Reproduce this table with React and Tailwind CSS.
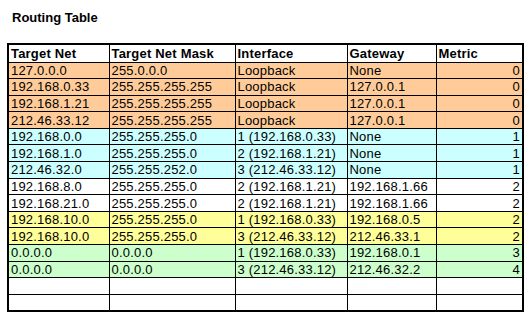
const rows = [
  ['127.0.0.0', '255.0.0.0', 'Loopback', 'None', '0', 'bg-[#ffcc99]'],
  ['192.168.0.33', '255.255.255.255', 'Loopback', '127.0.0.1', '0', 'bg-[#ffcc99]'],
  ['192.168.1.21', '255.255.255.255', 'Loopback', '127.0.0.1', '0', 'bg-[#ffcc99]'],
  ['212.46.33.12', '255.255.255.255', 'Loopback', '127.0.0.1', '0', 'bg-[#ffcc99]'],
  ['192.168.0.0', '255.255.255.0', '1 (192.168.0.33)', 'None', '1', 'bg-[#ccffff]'],
  ['192.168.1.0', '255.255.255.0', '2 (192.168.1.21)', 'None', '1', 'bg-[#ccffff]'],
  ['212.46.32.0', '255.255.252.0', '3 (212.46.33.12)', 'None', '1', 'bg-[#ccffff]'],
  ['192.168.8.0', '255.255.255.0', '2 (192.168.1.21)', '192.168.1.66', '2', 'bg-white'],
  ['192.168.21.0', '255.255.255.0', '2 (192.168.1.21)', '192.168.1.66', '2', 'bg-white'],
  ['192.168.10.0', '255.255.255.0', '1 (192.168.0.33)', '192.168.0.5', '2', 'bg-[#ffff99]'],
  ['192.168.10.0', '255.255.255.0', '3 (212.46.33.12)', '212.46.33.1', '2', 'bg-[#ffff99]'],
  ['0.0.0.0', '0.0.0.0', '1 (192.168.0.33)', '192.168.0.1', '3', 'bg-[#ccffcc]'],
  ['0.0.0.0', '0.0.0.0', '3 (212.46.33.12)', '212.46.32.2', '4', 'bg-[#ccffcc]'],
  ['', '', '', '', '', 'bg-white'],
  ['', '', '', '', '', 'bg-white'],
];

const cell = 'border border-black px-[2px] py-0 leading-[15px] whitespace-nowrap tracking-[0.2px]';

export default function App() {
  return (
    <div className="w-[532px] h-[323px] bg-white text-black font-['Arial','Liberation_Sans',sans-serif] text-[13px]">
      <div className="pt-[10px] pl-[12px] font-bold leading-[16px]">Routing Table</div>
      <div className="pt-[17px] pl-[7px]">
        <table className="border-collapse border-2 border-black w-[517px] table-fixed">
          <colgroup>
            <col className="w-[101px]" />
            <col className="w-[126px]" />
            <col className="w-[112px]" />
            <col className="w-[89px]" />
            <col className="w-[87px]" />
          </colgroup>
          <thead>
            <tr className="bg-white font-bold h-[18px]">
              <td className={cell}>Target Net</td>
              <td className={cell}>Target Net Mask</td>
              <td className={cell}>Interface</td>
              <td className={cell}>Gateway</td>
              <td className={cell}>Metric</td>
            </tr>
          </thead>
          <tbody>
            {rows.map((r, i) => (
              <tr key={i} className={r[5] + ' h-[16.6px]'}>
                <td className={cell}>{r[0]}</td>
                <td className={cell}>{r[1]}</td>
                <td className={cell}>{r[2]}</td>
                <td className={cell}>{r[3]}</td>
                <td className={cell + ' text-right'}>{r[4]}</td>
              </tr>
            ))}
          </tbody>
        </table>
      </div>
    </div>
  );
}
